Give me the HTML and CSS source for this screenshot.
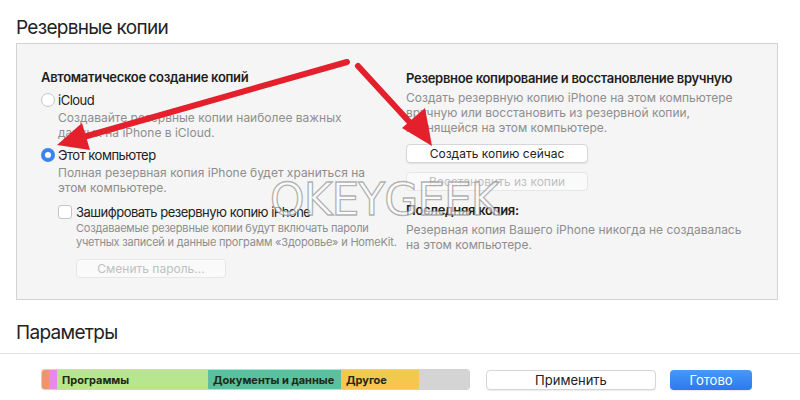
FILE: index.html
```html
<!DOCTYPE html>
<html>
	<head>
		<meta charset="UTF-8">
		<title>Резервные копии</title>
		<link rel="stylesheet" href="styles.css">
	</head>
	<body>
		<h2 class="title">Резервные копии</h2>
		<div class="panel">
			<div class="col left">
				<div class="head">Автоматическое создание копий</div>
				<label class="option"><span class="radio"></span>iCloud</label>
				<p class="desc">Создавайте резервные копии наиболее важных<br>данных на iPhone в iCloud.</p>
				<label class="option"><span class="radio on"></span>Этот компьютер</label>
				<p class="desc">Полная резервная копия iPhone будет храниться на<br>этом компьютере.</p>
				<div class="sub">
					<label class="option"><span class="check"></span>Зашифровать резервную копию iPhone</label>
					<p class="small">Создаваемые резервные копии будут включать пароли<br>учетных записей и данные программ «Здоровье» и HomeKit.</p>
					<button class="btn off pass">Сменить пароль...</button>
				</div>
			</div>
			<div class="col right">
				<div class="head">Резервное копирование и восстановление вручную</div>
				<p class="desc">Создать резервную копию iPhone на этом компьютере<br>вручную или восстановить из резервной копии,<br>хранящейся на этом компьютере.</p>
				<button class="btn wide">Создать копию сейчас</button>
				<button class="btn off wide">Восстановить из копии</button>
				<div class="head last">Последняя копия:</div>
				<p class="desc">Резервная копия Вашего iPhone никогда не создавалась<br>на этом компьютере.</p>
			</div>
		</div>
		<h2 class="title params">Параметры</h2>
		<div class="footer">
			<div class="storage">
				<span class="seg s-orange" style="width:7px"></span>
				<span class="seg s-pink" style="width:8px"></span>
				<span class="seg s-green" style="width:151px">Программы</span>
				<span class="seg s-teal" style="width:133px">Документы и данные</span>
				<span class="seg s-yellow" style="width:78px">Другое</span>
				<span class="seg s-gray"></span>
			</div>
			<button class="btn apply">Применить</button>
			<button class="btn done">Готово</button>
		</div>

		<div class="mark">OKEYGEEK</div>
		<svg class="arrows" width="800" height="400" viewBox="0 0 800 400">
			<line x1="347" y1="62" x2="80" y2="138" stroke="#e3202b" stroke-width="6" stroke-linecap="round"/>
			<polygon points="57,145 82,123 90,150" fill="#e3202b"/>
			<line x1="358" y1="66" x2="415" y2="128" stroke="#e3202b" stroke-width="6" stroke-linecap="round"/>
			<polygon points="432,146 402,128 425,108" fill="#e3202b"/>
		</svg>
	</body>
</html>
```

FILE: styles.css
```css
body{
	margin: 0;
	width: 800px;
	height: 400px;
	overflow: hidden;
	background: #fff;
	font-family: Inter, "Noto Sans", sans-serif;
	color: #222;
	position: relative;
}
p{
	margin: 0;
	white-space: nowrap;
}
.title{
	margin: 0;
	padding: 15px 0 0 16px;
	font-size: 19px;
	font-weight: normal;
	letter-spacing: -0.7px;
	line-height: 25px;
	color: #222;
}
.panel{
	margin: 3px 22px 0 16px;
	height: 255px;
	background: #f5f5f5;
	border: 1px solid #d3d3d3;
	display: grid;
	grid-template-columns: 365px 1fr;
	padding: 0 0 0 24px;
}
.col{
	display: flex;
	flex-direction: column;
	align-items: flex-start;
}
.left{
	padding-top: 25px;
}
.right{
	padding-top: 26px;
}
.head{
	font-size: 13px;
	font-weight: 600;
	letter-spacing: -0.3px;
	line-height: 16px;
	color: #1e1e1e;
	white-space: nowrap;
}
.option{
	display: flex;
	align-items: center;
	font-size: 13px;
	letter-spacing: -0.5px;
	line-height: 16px;
	color: #222;
	margin-top: 7px;
	white-space: nowrap;
}
.radio{
	width: 14px;
	height: 14px;
	border-radius: 50%;
	border: 1px solid #c4c4c4;
	background: #fff;
	margin-right: 3px;
	box-sizing: border-box;
}
.radio.on{
	border: 4px solid #3a83f2;
	background: #fff;
}
.check{
	width: 14px;
	height: 14px;
	border-radius: 3px;
	border: 1px solid #c4c4c4;
	background: #fff;
	margin-right: 4px;
	box-sizing: border-box;
}
.desc{
	font-size: 12px;
	line-height: 15px;
	color: #8e8e8e;
	margin-left: 17px;
	margin-top: 2px;
}
.right .desc{
	margin-left: 0;
	margin-top: 4px;
}
.sub{
	margin-left: 17px;
	display: flex;
	flex-direction: column;
	align-items: flex-start;
}
.sub .option{
	margin-top: 9px;
}
.small{
	font-size: 11px;
	letter-spacing: -0.2px;
	line-height: 14px;
	color: #8e8e8e;
	margin-left: 18px;
	margin-top: 1px;
}
.btn{
	font-family: inherit;
	font-size: 12px;
	height: 19px;
	padding: 0;
	background: #fff;
	border: 1px solid #d6d6d6;
	border-radius: 4px;
	color: #222;
	box-shadow: 0 1px 1px rgba(0,0,0,0.08);
}
.btn.off{
	background: #fafafa;
	border-color: #e6e6e6;
	color: #c0c0c0;
	box-shadow: none;
}
.pass{
	margin: 10px 0 0 18px;
	width: 150px;
}
.wide{
	width: 182px;
	margin-top: 9px;
}
.head.last{
	margin-top: 11px;
}
.right .desc:last-child{
	margin-top: 4px;
}
.params{
	padding-top: 20px;
	padding-bottom: 8px;
	border-bottom: 1px solid #e2e2e2;
}
.footer{
	display: flex;
	align-items: center;
	padding: 15px 0 0 41px;
}
.storage{
	display: flex;
	width: 429px;
	height: 21px;
	border-radius: 3px;
	overflow: hidden;
	border: 1px solid #d2d2d2;
	box-sizing: border-box;
}
.seg{
	display: flex;
	align-items: center;
	padding-left: 5px;
	box-sizing: border-box;
	font-size: 11px;
	font-weight: 700;
	color: #1d2a14;
	white-space: nowrap;
}
.s-orange{ background: #f1946c; padding: 0; }
.s-pink{ background: #e68ae6; padding: 0; }
.s-green{ background: #b7e68e; }
.s-teal{ background: #5cbf9d; }
.s-yellow{ background: #f6c74f; }
.s-gray{ background: #d4d4d4; flex: 1; }
.apply{
	margin-left: 16px;
	width: 170px;
	height: 20px;
	font-size: 13px;
}
.done{
	margin-left: 14px;
	width: 82px;
	height: 20px;
	font-size: 13px;
	color: #fff;
	border: none;
	background: linear-gradient(#4b97f8, #2a7af0);
}
.mark{
	position: absolute;
	left: 270px;
	top: 178px;
	font-family: "DejaVu Sans", sans-serif;
	font-size: 44px;
	line-height: 44px;
	letter-spacing: -1px;
	color: rgba(255,255,255,0.6);
	-webkit-text-stroke: 1.3px rgba(130,130,130,0.6);
	pointer-events: none;
}
.arrows{
	position: absolute;
	left: 0;
	top: 0;
	pointer-events: none;
}
```
